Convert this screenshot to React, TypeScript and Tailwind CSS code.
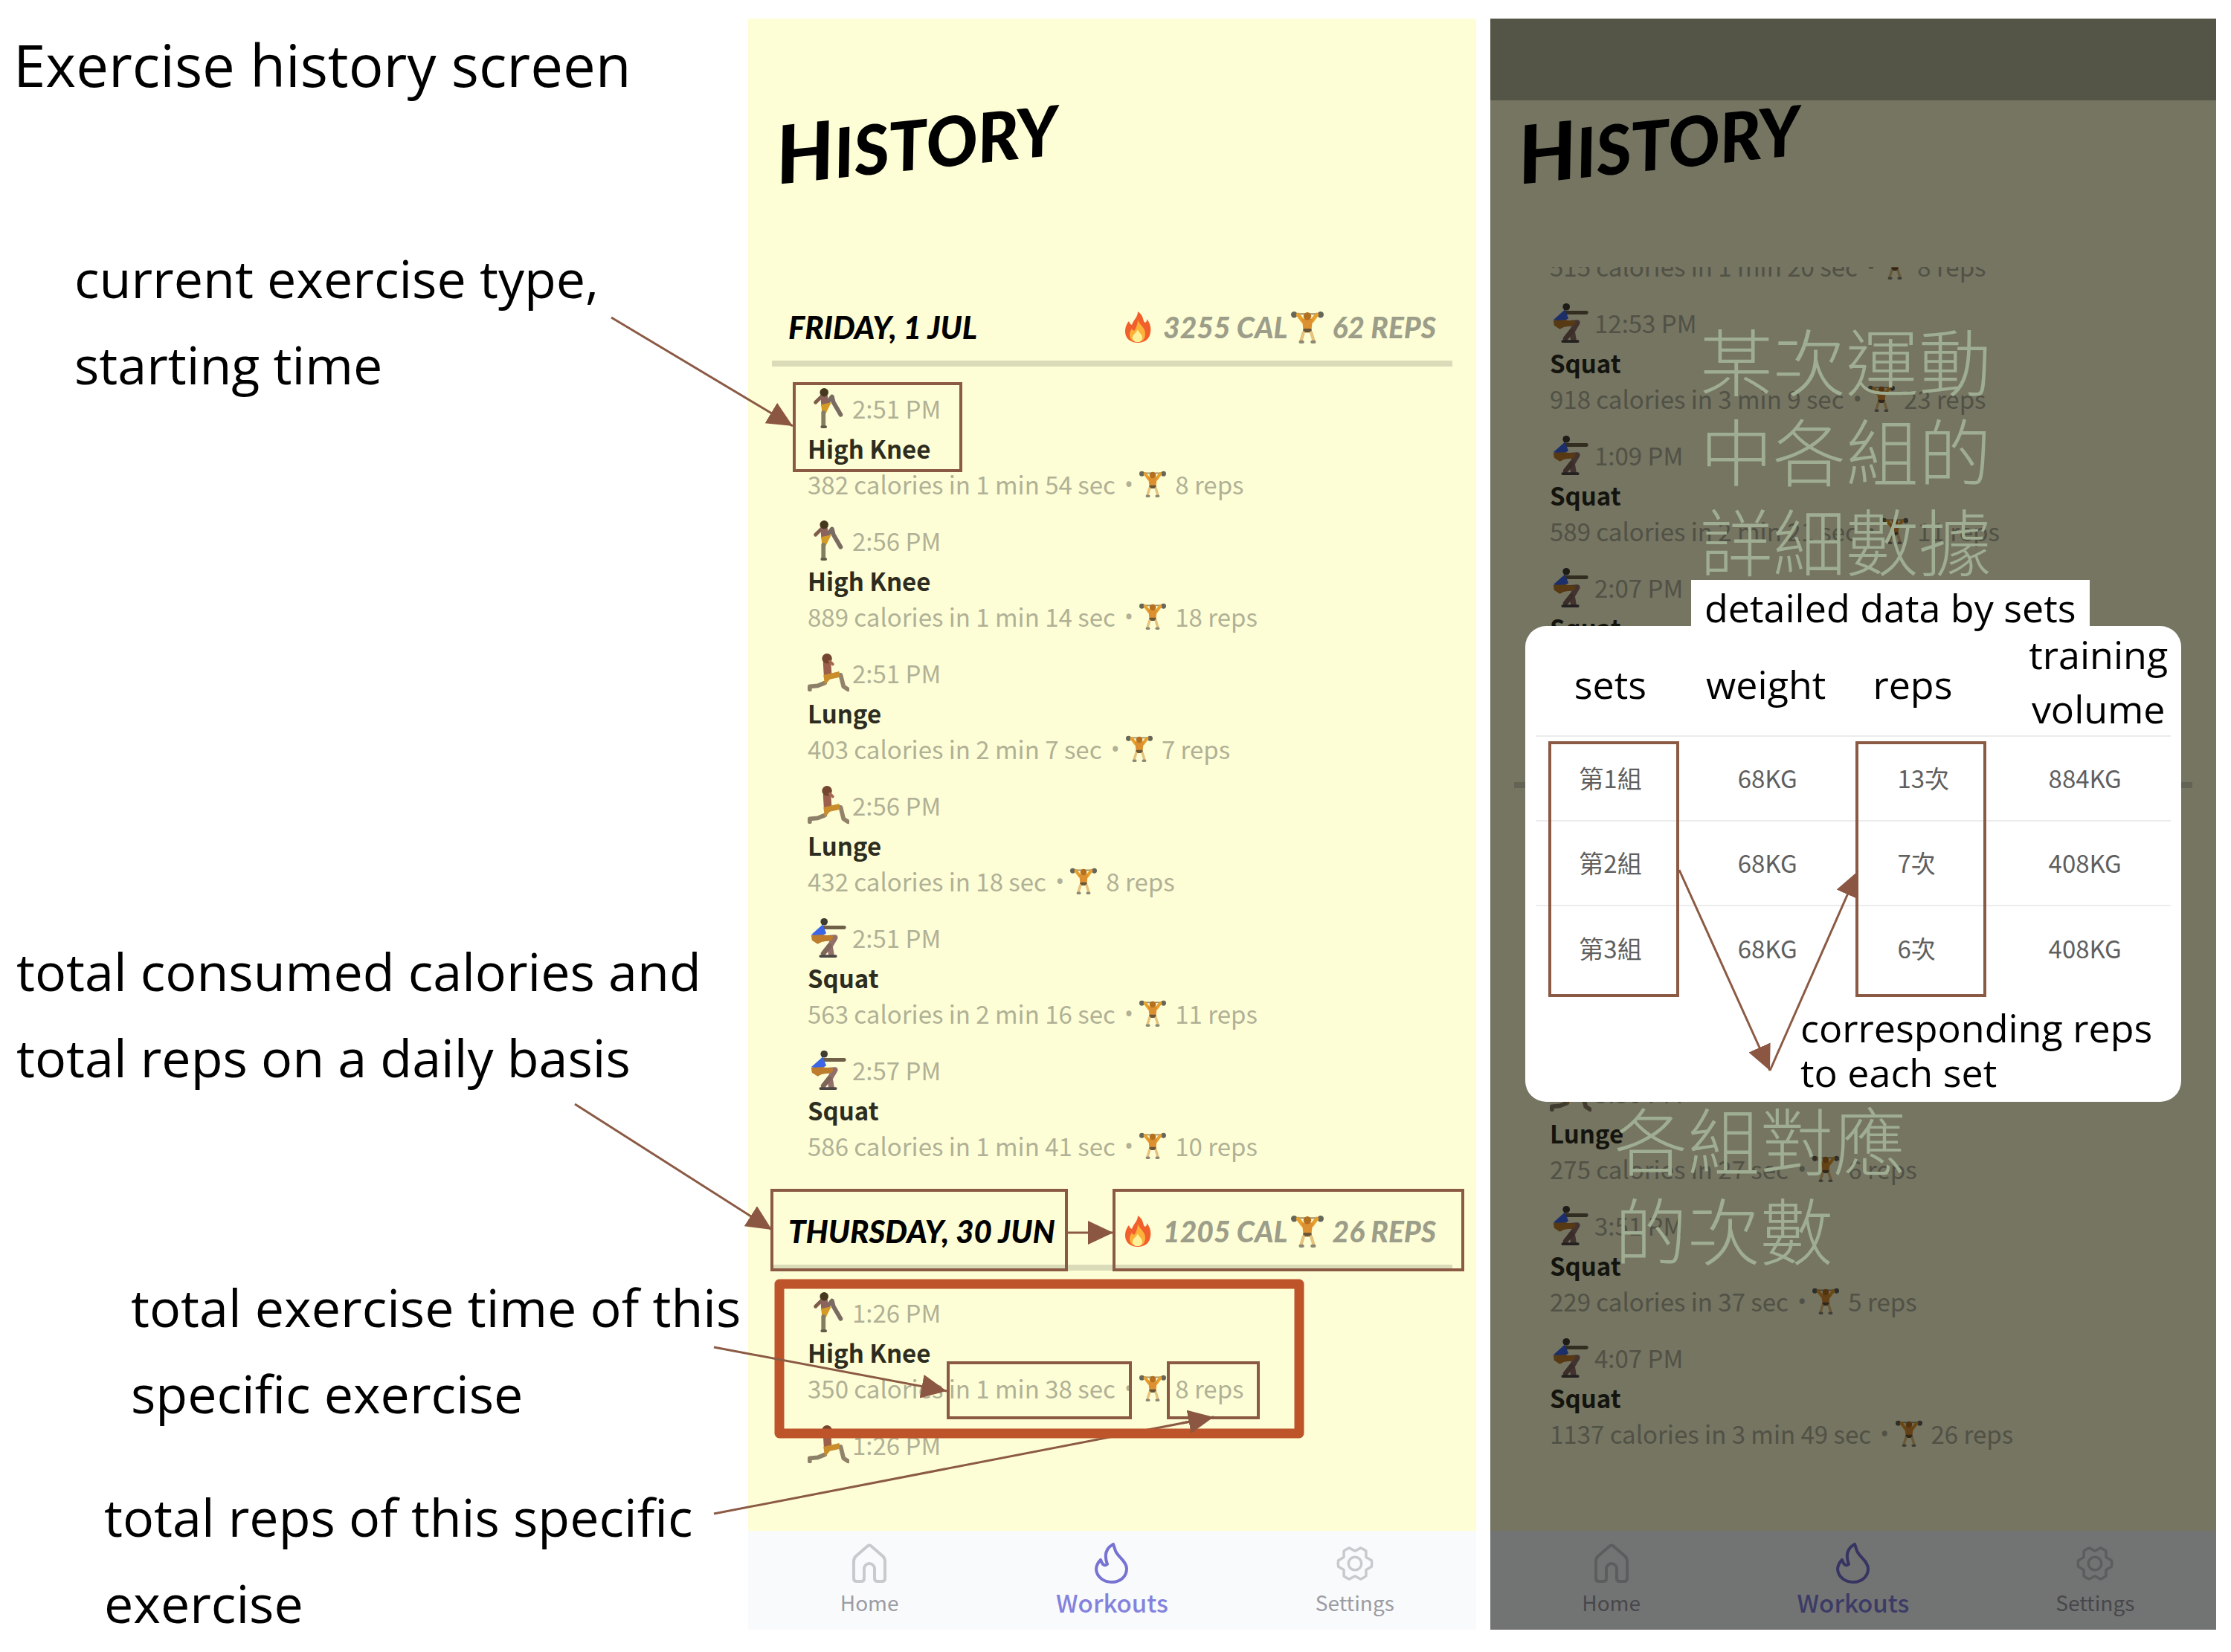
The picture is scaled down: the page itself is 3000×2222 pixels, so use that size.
import React from 'react'
import { PiGearSix } from 'react-icons/pi'

type Exercise = 'High Knee' | 'Lunge' | 'Squat'

interface Workout {
  type: Exercise
  time?: string
  summary?: string
  reps?: string
}

const FRIDAY: Workout[] = [
  { type: 'High Knee', time: '2:51 PM', summary: '382 calories in 1 min 54 sec', reps: '8 reps' },
  { type: 'High Knee', time: '2:56 PM', summary: '889 calories in 1 min 14 sec', reps: '18 reps' },
  { type: 'Lunge', time: '2:51 PM', summary: '403 calories in 2 min 7 sec', reps: '7 reps' },
  { type: 'Lunge', time: '2:56 PM', summary: '432 calories in 18 sec', reps: '8 reps' },
  { type: 'Squat', time: '2:51 PM', summary: '563 calories in 2 min 16 sec', reps: '11 reps' },
  { type: 'Squat', time: '2:57 PM', summary: '586 calories in 1 min 41 sec', reps: '10 reps' },
]

const THURSDAY: Workout[] = [
  { type: 'High Knee', time: '1:26 PM', summary: '350 calories in 1 min 38 sec', reps: '8 reps' },
  { type: 'Lunge', time: '1:26 PM' },
]

const EARLIER: Workout[] = [
  { type: 'Squat', time: '12:53 PM', summary: '918 calories in 3 min 9 sec', reps: '23 reps' },
  { type: 'Squat', time: '1:09 PM', summary: '589 calories in 2 min 21 sec', reps: '11 reps' },
  { type: 'Squat', time: '2:07 PM', summary: '', reps: '' },
]

const LATER: Workout[] = [
  { type: 'Lunge', time: '3:30 PM', summary: '275 calories in 27 sec', reps: '6 reps' },
  { type: 'Squat', time: '3:51 PM', summary: '229 calories in 37 sec', reps: '5 reps' },
  { type: 'Squat', time: '4:07 PM', summary: '1137 calories in 3 min 49 sec', reps: '26 reps' },
]

const SETS = [
  { set: '第1組', weight: '68KG', reps: '13次', volume: '884KG' },
  { set: '第2組', weight: '68KG', reps: '7次', volume: '408KG' },
  { set: '第3組', weight: '68KG', reps: '6次', volume: '408KG' },
]

function ExerciseIcon({ type }: { type: Exercise }) {
  return (
    <svg className="h-14 w-14 shrink-0" viewBox="0 0 58 56" fill="none" strokeLinecap="round" strokeLinejoin="round" aria-hidden="true">
      {type === 'High Knee' && (
        <>
          <path d="M20 11L11 20" stroke="#7d5c4c" strokeWidth="5" />
          <path d="M27 21L34 12L36 20L46 37" stroke="#7a6c62" strokeWidth="6" />
          <path d="M23 12L24 24" stroke="#8d625c" strokeWidth="10" />
          <path d="M19 23L33 20L25 36L20 35Z" fill="#d39a25" />
          <path d="M22 34V53" stroke="#857d62" strokeWidth="6" />
          <path d="M20 54H25" stroke="#5f5b48" strokeWidth="4" />
          <circle cx="23" cy="6" r="6" fill="#46381f" />
        </>
      )}
      {type === 'Lunge' && (
        <>
          <path d="M24 42L14 46L3 47V51" stroke="#8d8068" strokeWidth="6" />
          <path d="M40 31L46 31L50 47L56 51" stroke="#93826a" strokeWidth="6" />
          <path d="M27 14L28 30" stroke="#9b5f4c" strokeWidth="11" />
          <path d="M22 31L44 26L45 34L31 37L24 45Z" fill="#c98d2c" />
          <circle cx="27" cy="8" r="7" fill="#74452f" />
          <path d="M31 12L35 16" stroke="#a4694f" strokeWidth="4" />
        </>
      )}
      {type === 'Squat' && (
        <>
          <path d="M22 14H51" stroke="#6f6047" strokeWidth="5" />
          <path d="M15 30L38 28L31 40L33 52" stroke="#927069" strokeWidth="8" />
          <path d="M30 40L22 50" stroke="#80655b" strokeWidth="7" />
          <path d="M5 24L21 10L26 22L18 27Z" fill="#3d66e6" />
          <path d="M5 25L20 24L36 26L34 32L20 34L14 37L6 32Z" fill="#bd7d2d" />
          <path d="M18 54H39" stroke="#4c4644" strokeWidth="4" />
          <circle cx="23" cy="6" r="5" fill="#3f3d30" />
        </>
      )}
    </svg>
  )
}

function LifterIcon({ className }: { className: string }) {
  return (
    <svg className={className} viewBox="0 0 42 44" fill="none" strokeLinecap="round" aria-hidden="true">
      <path d="M4 5H38" stroke="#9a8f6c" strokeWidth="2" />
      <circle cx="4" cy="6" r="4" fill="#66665a" />
      <circle cx="38" cy="6" r="4" fill="#66665a" />
      <path d="M9 6L15 14M33 6L27 14" stroke="#e8a02c" strokeWidth="5" />
      <path d="M14 11H28L26 27H16Z" fill="#dc9030" />
      <circle cx="21" cy="8" r="5" fill="#b5701f" />
      <path d="M16 24H26L27 29H15Z" fill="#6b5638" />
      <path d="M16 29L13 39M26 29L29 39" stroke="#e6c27a" strokeWidth="4" />
      <path d="M12 41H15M27 41H30" stroke="#8c8a76" strokeWidth="4" />
    </svg>
  )
}

function FireIcon() {
  return (
    <svg className="h-11 w-9" viewBox="0 0 36 44" aria-hidden="true">
      <path d="M18 1C27 7 24 14 28 16C30 15 30 13 30 11C35 17 36 23 35 29C34 38 27 43 18 43C8 43 1 37 1 28C1 21 4 16 6 14C7 17 8 18 10 19C12 12 18 9 18 1Z" fill="#f1602c" />
      <path d="M18 12C20 19 28 22 28 31C28 38 24 42 18 42C11 42 7 38 7 32C7 28 9 26 10 24C11 27 13 27 14 26C16 22 18 18 18 12Z" fill="#fcb13a" />
      <path d="M18 25C19 30 24 31 24 36C24 40 21 42 18 42C14 42 11 40 11 36C11 32 16 30 18 25Z" fill="#fff29a" />
    </svg>
  )
}

function WorkoutDetail({ summary, reps }: { summary?: string; reps?: string }) {
  return (
    <p className="flex h-11 items-center text-[33px] leading-11 whitespace-nowrap text-[#b0b196]">
      {summary}
      <span className="ml-3 font-['Open_Sans',sans-serif]">•</span>
      <LifterIcon className="mr-3 ml-2 h-11 w-9" />
      {reps}
    </p>
  )
}

function WorkoutItem({ type, time, summary, reps }: Workout) {
  return (
    <li className="mb-[26px] text-[33px] last:mb-0">
      <div className="flex h-14 items-center gap-1 leading-14 text-[#b0b196]">
        <ExerciseIcon type={type} />
        {time}
      </div>
      {summary !== undefined && (
        <>
          <h3 className="h-[52px] leading-[52px] font-bold text-[#2c2c20]">{type}</h3>
          {summary ? <WorkoutDetail summary={summary} reps={reps} /> : <div className="h-11" />}
        </>
      )}
    </li>
  )
}

function DayHeader({ day, calories, reps }: { day?: string; calories?: string; reps?: string }) {
  return (
    <div className="mx-8 flex h-[98px] items-center justify-between border-b-8 border-[#dadbb8] px-[22px] font-['Lato',sans-serif] font-black whitespace-nowrap uppercase italic">
      {day && (
        <>
          <h2 className="text-[42px] text-black">{day}</h2>
          <div className="flex items-center text-[39px] text-[#9d9e8a]">
            <FireIcon />
            <span className="ml-4">{calories}</span>
            <LifterIcon className="mr-3 ml-1 h-12 w-11" />
            <span>{reps}</span>
          </div>
        </>
      )}
    </div>
  )
}

function TabBar() {
  return (
    <nav className="grid h-[133px] grid-cols-3 bg-[#f9fafb] pt-4 text-[28px] leading-10 text-[#9c9ca4]">
      <a href="#home" className="flex flex-col items-center gap-1">
        <svg className="h-14 w-12" viewBox="0 0 48 56" fill="none" stroke="#c9cace" strokeWidth="4" strokeLinejoin="round" aria-hidden="true">
          <path d="M17 48V35a7 7 0 0 1 14 0V48q0 4 4 4h6q4 0 4-4V25q0-4-3-7L27 5q-3-3-6 0L6 18q-3 3-3 7V48q0 4 4 4h6q4 0 4-4Z" />
        </svg>
        Home
      </a>
      <a href="#workouts" className="flex flex-col items-center gap-1 text-[33px] font-medium text-[#8482de]">
        <svg className="h-14 w-12" viewBox="-2 -1 48 56" fill="none" stroke="#7673d3" strokeWidth="4" strokeLinejoin="round" aria-hidden="true">
          <path d="M24 1C13 7 12 17 16 28C12 31 9 28 7 22C3 26 1 31 1 35C2 45 11 52 22 52C34 52 42 44 42 34C42 24 30 18 27 10C26 7 25 4 24 1Z" />
        </svg>
        Workouts
      </a>
      <a href="#settings" className="flex flex-col items-center gap-1">
        <PiGearSix className="h-14 w-14 text-[#c9cace]" aria-hidden="true" />
        Settings
      </a>
    </nav>
  )
}

function PhoneTitle() {
  return (
    <h1 className="ml-9 flex h-[334px] items-center pb-3">
      <span className="inline-block -rotate-6 font-['Lato',sans-serif] text-[92px] leading-none font-black text-black uppercase italic first-letter:text-[108px]">
        History
      </span>
    </h1>
  )
}

function HistoryScreen() {
  return (
    <section className="flex flex-col bg-[#fefed6]">
      <div className="flex-1">
        <PhoneTitle />
        <div className="pt-9 pb-12">
          <DayHeader day="Friday, 1 Jul" calories="3255 cal" reps="62 reps" />
          <ul className="pt-7 pl-20">
            {FRIDAY.map((w, i) => <WorkoutItem key={i} {...w} />)}
          </ul>
        </div>
        <DayHeader day="Thursday, 30 Jun" calories="1205 cal" reps="26 reps" />
        <ul className="pt-7 pl-20">
          {THURSDAY.map((w, i) => <WorkoutItem key={i} {...w} />)}
        </ul>
      </div>
      <TabBar />
    </section>
  )
}

function SetsDialog() {
  return (
    <div role="dialog" aria-label="detailed data by sets" className="mx-[47px] -mt-3 min-h-[640px] rounded-[28px] bg-white px-[14px]">
      <table className="w-full table-fixed text-center">
        <thead>
          <tr className="h-[148px] border-b-2 border-[#ececec] font-['Open_Sans',sans-serif] text-[52px] leading-[73px] text-black">
            <th className="w-[24%] pt-2 pr-1 font-normal">sets</th>
            <th className="w-[25%] pt-2 pr-1 font-normal">weight</th>
            <th className="w-[24%] pt-2 pr-7 font-normal">reps</th>
            <th className="w-[27%] pl-9 font-normal">training volume</th>
          </tr>
        </thead>
        <tbody className="text-[33px] text-[#5f5f5f]">
          {SETS.map((s) => (
            <tr key={s.set} className="h-[114px] border-b-2 border-[#ececec] last:border-0">
              <td className="pr-1">{s.set}</td>
              <td>{s.weight}</td>
              <td className="pl-[68px] text-left">{s.reps}</td>
              <td>{s.volume}</td>
            </tr>
          ))}
        </tbody>
      </table>
      <p className="mt-5 ml-[356px] font-['Open_Sans',sans-serif] text-[52px] leading-[60px] whitespace-nowrap text-black">
        corresponding reps
        <br />
        to each set
      </p>
    </div>
  )
}

function DetailScreen() {
  return (
    <section className="relative ml-[19px] flex flex-col bg-[#fefed6]">
      <div className="flex-1">
        <PhoneTitle />
        <div className="overflow-hidden pb-[22px]">
          <div className="-mt-[23px] mb-[26px] pl-20">
            <WorkoutDetail summary="515 calories in 1 min 20 sec" reps="8 reps" />
          </div>
          <ul className="pb-[26px] pl-20">
            {EARLIER.map((w, i) => <WorkoutItem key={i} {...w} />)}
          </ul>
        </div>
        <DayHeader />
        <ul className="pt-[382px] pl-20">
          {LATER.map((w, i) => <WorkoutItem key={i} {...w} />)}
        </ul>
      </div>
      <TabBar />

      {/* dimmed backdrop with the dialog on top */}
      <div className="absolute inset-0 bg-black/54 font-['Noto_Sans_CJK_TC',sans-serif]">
        <div className="h-[110px] bg-black/27" />
        <p className="mt-[287px] ml-[282px] text-[98px] leading-[121px] font-light whitespace-nowrap text-[#9fad92]">
          某次運動
          <br />
          中各組的
          <br />
          詳細數據
        </p>
        <p className="relative -mt-[5px] ml-[270px] w-fit bg-white px-[18px] font-['Open_Sans',sans-serif] text-[52px] leading-[74px] whitespace-nowrap text-black">
          detailed data by sets
        </p>
        <SetsDialog />
        <p className="-mt-3 ml-[167px] text-[98px] leading-[121px] font-light whitespace-nowrap text-[#9fad92]">
          各組對應
          <br />
          的次數
        </p>
      </div>
    </section>
  )
}

function Callouts() {
  return (
    <svg className="pointer-events-none absolute inset-0 h-full w-full" viewBox="0 0 3000 2222" fill="none" stroke="#8b5a44" strokeWidth="4" aria-hidden="true">
      <defs>
        <marker id="arrow" markerUnits="userSpaceOnUse" markerWidth="36" markerHeight="36" refX="34" refY="16" orient="auto">
          <path d="M0 0L34 16L0 32Z" fill="#8b5742" stroke="none" />
        </marker>
      </defs>
      <path d="M960 2036L1632 1906" strokeWidth="3" />
      <rect x="1048" y="1727" width="699" height="201" stroke="#be542a" strokeWidth="13" strokeLinejoin="round" />
      <rect x="1068" y="516" width="224" height="117" />
      <rect x="1038" y="1601" width="396" height="107" />
      <rect x="1498" y="1601" width="469" height="107" />
      <rect x="1275" y="1833" width="245" height="74" />
      <rect x="1571" y="1833" width="121" height="74" />
      <rect x="2084" y="999" width="172" height="340" />
      <rect x="2497" y="999" width="172" height="340" />
      <g strokeWidth="3" markerEnd="url(#arrow)">
        <path d="M822 427L1066 573" />
        <path d="M773 1485L1038 1654" />
        <path d="M1436 1658H1497" />
        <path d="M960 1812L1273 1871" />
        <path d="M1590 1914L1632 1906" />
        <path d="M2258 1170L2380 1440" />
        <path d="M2380 1440L2498 1172" />
      </g>
    </svg>
  )
}

export default function App() {
  return (
    <main className="relative grid min-h-screen grid-cols-[1006fr_979fr_995fr] bg-white pt-[25px] pr-5 pb-[30px] font-['Noto_Sans_CJK_TC',sans-serif]">
      <div className="-mb-8 self-start pt-1 font-['Open_Sans',sans-serif] text-[70px] leading-[116px] whitespace-nowrap text-black">
        <h1 className="pl-[18px] text-[78px]">Exercise history screen</h1>
        <p className="mt-[171px] pl-[100px]">
          current exercise type,
          <br />
          starting time
        </p>
        <p className="mt-[700px] pl-[22px]">
          total consumed calories and
          <br />
          total reps on a daily basis
        </p>
        <p className="mt-[220px] pl-[176px]">
          total exercise time of this
          <br />
          specific exercise
        </p>
        <p className="mt-[50px] pl-[140px]">
          total reps of this specific
          <br />
          exercise
        </p>
      </div>
      <HistoryScreen />
      <DetailScreen />
      <Callouts />
    </main>
  )
}
